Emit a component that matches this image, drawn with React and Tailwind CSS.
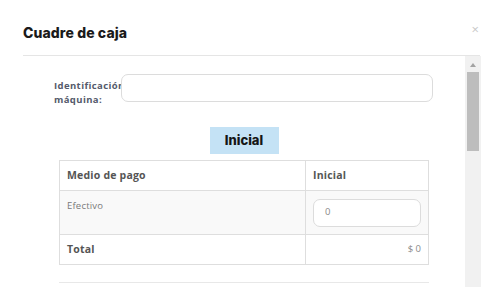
export default function App() {
  return (
    <div className="w-[503px] h-[287px] bg-white overflow-hidden relative" style={{ fontFamily: "'Open Sans', 'Liberation Sans', sans-serif" }}>
      <div className="h-[56px] mx-[23px] flex items-center justify-between border-b border-[#e5e5e5]">
        <h1 className="text-[14px] font-extrabold text-[#1a1a1a] tracking-[0.1px] mt-[10px]" style={{ fontFamily: "Inter, sans-serif" }}>Cuadre de caja</h1>
        <span className="text-[#c8c8c8] text-[13px] leading-none mr-[1px] mt-[3px]">×</span>
      </div>
      <div className="flex ml-[23px] mr-[22px] h-[231px]">
        <div className="flex-1 overflow-hidden">
          <div className="flex items-start pl-[31px] pt-[18px]">
            <label className="w-[67px] overflow-hidden whitespace-nowrap text-[9.5px] font-bold text-[#545a6b] leading-[14px] pt-[5px] tracking-[0.4px]">
              Identificación<br />máquina:
            </label>
            <input className="w-[312px] h-[28px] border border-[#dcdcdc] rounded-[7px] outline-none" />
          </div>
          <div className="flex justify-center mt-[20px]">
            <div className="w-[69px] h-[27px] bg-[#c4e2f5] flex items-center justify-center text-[13px] font-extrabold text-[#151515]" style={{ fontFamily: "Inter, sans-serif" }}>
              Inicial
            </div>
          </div>
          <table className="ml-[36px] mt-[6px] w-[370px] border-collapse text-[10.5px]">
            <tbody>
              <tr className="h-[30px]">
                <td className="w-[246px] border border-[#dedede] px-[7px] font-bold text-[#555] tracking-[0.2px]">Medio de pago</td>
                <td className="border border-[#dedede] px-[7px] font-bold text-[#555] tracking-[0.2px]">Inicial</td>
              </tr>
              <tr className="h-[44px] bg-[#f9f9f9]">
                <td className="border border-[#dedede] px-[7px] align-top pt-[8px] text-[#7a7a7a] text-[9.5px] tracking-[0.2px]">Efectivo</td>
                <td className="border border-[#dedede] px-[7px]">
                  <div className="h-[28px] bg-white border border-[#dcdcdc] rounded-[7px] flex items-center px-[11px] text-[9.5px] text-[#8a8a8a]">0</div>
                </td>
              </tr>
              <tr className="h-[30px]">
                <td className="border border-[#dedede] px-[7px] font-bold text-[#555] tracking-[0.2px]">Total</td>
                <td className="border border-[#dedede] px-[7px] text-right text-[#8a8a8a] text-[9.5px]">$ 0</td>
              </tr>
            </tbody>
          </table>
          <div className="ml-[36px] mt-[17px] w-[370px] h-px bg-[#e8e8e8]"></div>
        </div>
        <div className="w-[16px] bg-[#f1f1f1] flex flex-col items-center">
          <div className="mt-[7px] w-0 h-0 border-l-[3.5px] border-r-[3.5px] border-b-[4px] border-l-transparent border-r-transparent border-b-[#a3a3a3]"></div>
          <div className="mt-[5px] w-[12px] h-[79px] bg-[#bdbdbd]"></div>
        </div>
      </div>
    </div>
  );
}
